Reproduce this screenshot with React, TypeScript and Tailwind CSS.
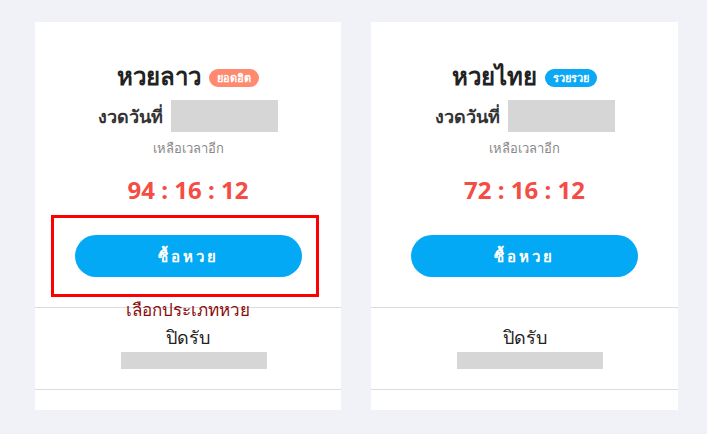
import React from 'react';

type Lotto = {
  name: string;
  badge: string;
  badgeColor: string;
  countdown: string;
  highlight?: boolean;
};

const lottos: Lotto[] = [
  { name: 'หวยลาว', badge: 'ยอดฮิต', badgeColor: 'bg-[#ff8a6f]', countdown: '94 : 16 : 12', highlight: true },
  { name: 'หวยไทย', badge: 'รวยรวย', badgeColor: 'bg-[#0aa8f5]', countdown: '72 : 16 : 12' },
];

const LottoCard = ({ item }: { item: Lotto }) => (
  <div className="relative bg-white flex flex-col">
    {/* Top section */}
    <div className="flex flex-col items-center pt-[38px] pb-[30px] border-b border-[#dcdcdc]">
      <div className="flex items-center gap-2 h-8">
        <span className="text-[24px] font-extrabold text-[#222] leading-8">{item.name}</span>
        <span className={`${item.badgeColor} text-white text-[11px] font-bold rounded-full px-2 h-[18px] leading-[18px] mt-1`}>
          {item.badge}
        </span>
      </div>
      <div className="flex items-center gap-2 mt-2 h-8">
        <span className="text-[18px] font-semibold text-[#333]">งวดวันที่</span>
        <div className="w-[107px] h-8 bg-[#d6d6d6]" />
      </div>
      <div className="text-[13px] text-[#888] mt-[6px] leading-5">เหลือเวลาอีก</div>
      <div className="text-[24px] font-bold text-[#f44d46] mt-4 leading-8">{item.countdown}</div>
      <button className="mt-[29px] w-[227px] h-[42px] rounded-full bg-[#03a9f4] text-white text-[15px] font-bold tracking-[0.2em]">
        ซื้อหวย
      </button>
    </div>

    {/* Bottom section */}
    <div className="flex flex-col items-center pt-[15px] pb-[20px] border-b border-[#dcdcdc]">
      <div className="text-[18px] text-[#222] leading-7">ปิดรับ</div>
      <div className="w-[146px] h-[17px] bg-[#d6d6d6] mt-[1px] ml-[11px]" />
    </div>
    <div className="h-5" />

    {item.highlight && (
      <>
        <div className="absolute left-[16px] top-[193px] w-[268px] h-[82px] border-[3px] border-[#ff0000]" />
        <div className="absolute left-0 right-0 top-[276px] text-center text-[17px] text-[#8b0c0c] leading-6">
          เลือกประเภทหวย
        </div>
      </>
    )}
  </div>
);

const App = () => {
  return (
    <div className="min-h-screen w-full bg-[#f1f2f7] pt-[22px] pl-[35px] font-['Noto_Sans',sans-serif]">
      <div className="grid grid-cols-[306px_307px] gap-[30px]">
        {lottos.map((item) => (
          <LottoCard key={item.name} item={item} />
        ))}
      </div>
    </div>
  );
};

export default App;
